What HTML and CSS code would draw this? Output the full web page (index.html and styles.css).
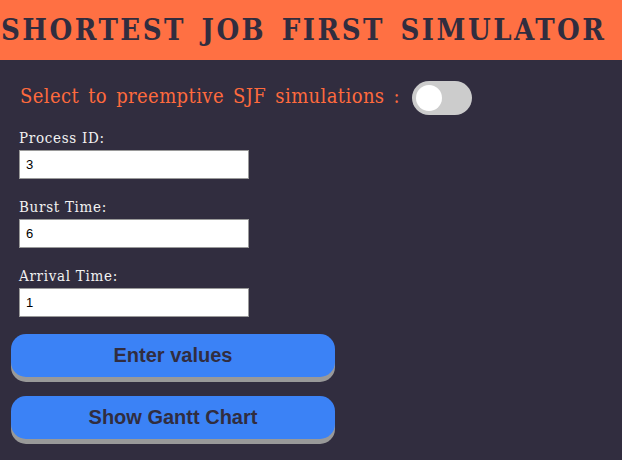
FILE: index.html
```html
<!DOCTYPE html>
<html>
<head>
<meta charset="utf-8">
<link rel="stylesheet" href="styles.css">
</head>
<body>
<header class="top">
  <h1 class="title">SHORTEST JOB FIRST SIMULATOR</h1>
</header>
<main class="panel">
  <div class="mode">
    <span class="mode-label">Select to preemptive SJF simulations :</span>
    <label class="switch"><input type="checkbox"><span class="slider"></span></label>
  </div>
  <div class="field">
    <label class="field-label">Process ID:</label>
    <input class="field-input" type="text" value="3">
  </div>
  <div class="field">
    <label class="field-label">Burst Time:</label>
    <input class="field-input" type="text" value="6">
  </div>
  <div class="field">
    <label class="field-label">Arrival Time:</label>
    <input class="field-input" type="text" value="1">
  </div>
  <div class="actions">
    <button class="btn">Enter values</button>
    <button class="btn">Show Gantt Chart</button>
  </div>
</main>
</body>
</html>
```

FILE: styles.css
```css
html, body {
  margin: 0;
  padding: 0;
  background: #312d3f;
  height: 100%;
  overflow: hidden;
}
.top {
  background: #ff7043;
  height: 60px;
  display: flex;
  align-items: center;
}
.title {
  margin: 0;
  padding-left: 1px;
  font-family: "DejaVu Serif", serif;
  font-stretch: condensed;
  font-weight: bold;
  font-size: 29px;
  letter-spacing: 2.5px;
  word-spacing: 4px;
  color: #312d3f;
  white-space: nowrap;
}
.panel {
  padding: 21px 0 0 19px;
  display: flex;
  flex-direction: column;
}
.mode {
  display: flex;
  align-items: center;
  gap: 12px;
  margin-bottom: 14px;
}
.mode-label {
  font-family: "DejaVu Serif", serif;
  font-stretch: condensed;
  font-size: 20px;
  letter-spacing: 0.4px;
  word-spacing: 3px;
  line-height: 24px;
  color: #ff6a3d;
  padding-left: 1px;
  position: relative;
  top: -2px;
}
.switch {
  position: relative;
  display: inline-block;
  width: 60px;
  height: 34px;
}
.switch input {
  opacity: 0;
  width: 0;
  height: 0;
}
.slider {
  position: absolute;
  inset: 0;
  background: #cccccc;
  border-radius: 34px;
}
.slider::before {
  content: "";
  position: absolute;
  left: 4px;
  top: 4px;
  width: 26px;
  height: 26px;
  border-radius: 50%;
  background: #ffffff;
}
.field {
  display: flex;
  flex-direction: column;
  align-items: flex-start;
  margin-bottom: 19px;
}
.field-label {
  font-family: "DejaVu Serif", serif;
  font-stretch: condensed;
  font-size: 15px;
  letter-spacing: 0.7px;
  color: #f2f2f2;
  line-height: 18px;
  margin-bottom: 3px;
}
.field-input {
  box-sizing: border-box;
  width: 230px;
  height: 29px;
  margin: 0;
  border: 1px solid #9a9a9a;
  padding: 0 6px;
  font-family: "Liberation Sans", Arial, sans-serif;
  font-size: 13px;
  color: #000;
  background: #fff;
  outline: none;
}
.actions {
  display: flex;
  flex-direction: column;
  gap: 19px;
  margin-left: -8px;
  margin-top: -2px;
}
.btn {
  width: 324px;
  height: 43px;
  border: none;
  border-radius: 15px;
  background: #3b82f6;
  box-shadow: 0 5px #999999;
  font-family: "Liberation Sans", Arial, sans-serif;
  font-weight: bold;
  font-size: 20px;
  color: #312d3f;
  cursor: pointer;
  padding: 0;
}
```
